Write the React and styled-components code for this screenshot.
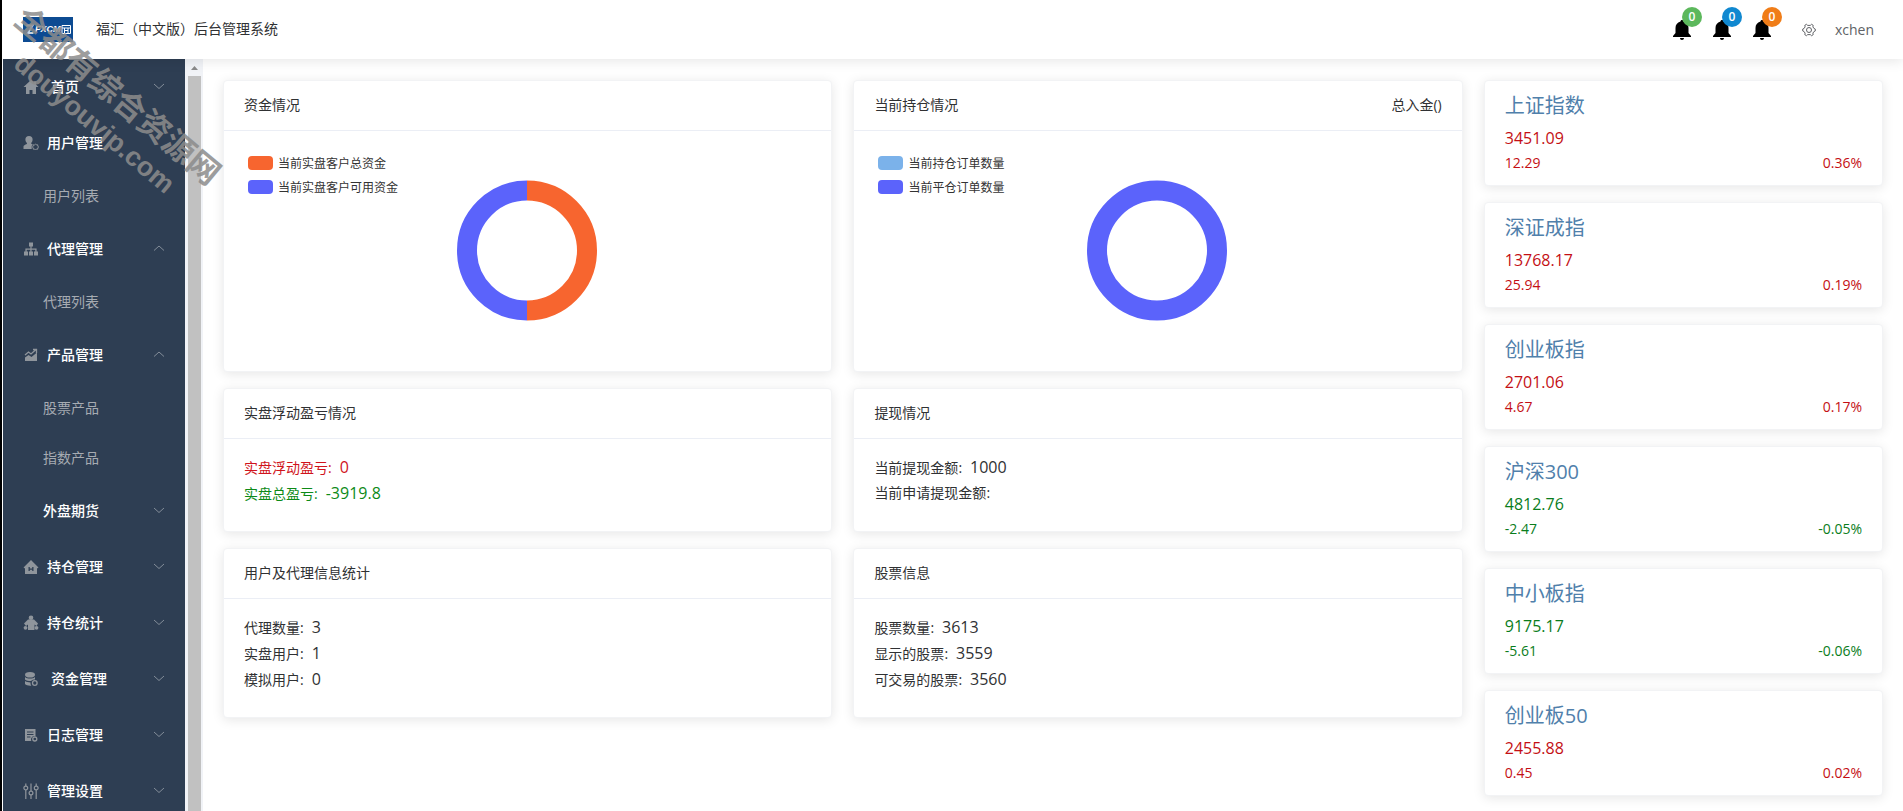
import { useState } from 'react';
import styled, { createGlobalStyle } from 'styled-components';

// Base page styles
const GlobalStyle = createGlobalStyle`
  * {
    box-sizing: border-box;
  }

  body {
    margin: 0;
    background: #fff;
    color: #303133;
    font-family: 'Open Sans', 'Noto Sans CJK SC', sans-serif;
    font-size: 14px;
  }

  button {
    font: inherit;
    border: none;
    background: none;
    padding: 0;
    cursor: pointer;
  }

  a {
    text-decoration: none;
  }

  h1, h2, h3, p, ul, dl, dd {
    margin: 0;
    padding: 0;
    font-weight: normal;
    font-size: inherit;
  }
`;

const Page = styled.div`
  position: relative;
  display: flex;
  flex-direction: column;
  height: 100vh;
  overflow: hidden;
  border-left: 2px solid #000;
`;

// Top bar
const TopBar = styled.header`
  display: flex;
  align-items: center;
  flex: none;
  height: 59px;
  padding: 0 29px 0 21px;
  background: #fff;
  box-shadow: 0 2px 12px rgba(0, 0, 0, 0.1);
  z-index: 1;
`;

const Logo = styled.svg`
  width: 50px;
  height: 25px;
  margin-right: 23px;
`;

const SiteTitle = styled.h1`
  flex: 1;
  padding-bottom: 2px;
  line-height: 20px;
`;

const Notices = styled.div`
  display: flex;
  gap: 20px;
  margin-right: 30px;
`;

const NoticeButton = styled.button`
  position: relative;
  width: 20px;
  height: 20px;

  svg {
    display: block;
  }
`;

const Badge = styled.span`
  position: absolute;
  left: 10px;
  top: -13px;
  width: 20px;
  height: 20px;
  border-radius: 50%;
  background: ${(props) => props.$color};
  color: #fff;
  font-size: 12px;
  font-weight: 600;
  line-height: 20px;
  text-align: center;
`;

const SettingButton = styled.button`
  display: flex;
  margin-right: 19px;
  color: #606266;
`;

const UserLink = styled.a`
  color: #606266;
  line-height: 20px;
`;

// Sidebar
const Body = styled.div`
  display: flex;
  flex: 1;
  min-height: 0;
`;

const Sidebar = styled.nav`
  flex: none;
  width: 183px;
  overflow: hidden;
  border-left: 1px solid #fff;
  background: #2e3e53;
`;

const MenuButton = styled.button`
  display: flex;
  align-items: center;
  width: 100%;
  height: 56px;
  padding: 0 20px 2px ${(props) => (props.$plain ? '40px' : '20px')};
  color: #fff;
  text-align: left;
`;

const MenuIcon = styled.svg`
  flex: none;
  width: 16px;
  height: 16px;
  margin-top: 2px;
  margin-right: ${(props) => (props.$wide ? '12px' : '8px')};
  color: #8f959c;
  fill: currentColor;
`;

const MenuLabel = styled.span`
  flex: 1;
  font-weight: 500;
`;

const Chevron = styled.svg`
  width: 12px;
  height: 12px;
  fill: none;
  stroke: #838d99;
`;

const SubLink = styled.a`
  display: block;
  height: 50px;
  padding-left: 40px;
  color: #a6abb2;
  line-height: 50px;
`;

const ScrollTrack = styled.div`
  display: flex;
  flex-direction: column;
  flex: none;
  width: 18px;
  padding: 0 2px 0 3px;
  background: #f1f3f7;
`;

const ScrollArrow = styled.svg`
  flex: none;
  width: 13px;
  height: 17px;
  fill: #8a8a8a;
`;

const ScrollThumb = styled.div`
  flex: 1;
  background: #c1c1c1;
`;

// Dashboard
const Main = styled.main`
  flex: 1;
  min-width: 0;
  overflow: hidden;
  display: grid;
  grid-template-columns: minmax(0, 609fr) minmax(0, 609fr) minmax(0, 399fr);
  align-items: start;
  gap: 21px;
  padding: 21px 20px;
`;

const Column = styled.div`
  display: flex;
  flex-direction: column;
  gap: 16px;
`;

const Card = styled.section`
  border: 1px solid #f2f3f5;
  border-radius: 4px;
  background: #fff;
  box-shadow: 0 2px 12px rgba(0, 0, 0, 0.1);
`;

const CardHeader = styled.div`
  display: flex;
  justify-content: space-between;
  padding: 14px 20px 15px;
  border-bottom: 1px solid #ebeef5;
  line-height: 20px;
`;

const CardBody = styled.dl`
  padding: 15px 20px 25px;
`;

const InfoLine = styled.div`
  display: flex;
  align-items: baseline;
  gap: 8px;
  height: 26px;
  line-height: 26px;
  color: ${(props) => props.$color || '#303133'};

  dd {
    font-size: 16px;
  }
`;

const ChartBody = styled.div`
  display: grid;
  grid-template-columns: 1fr auto 1fr;
  padding: 20px 26px 21px 24px;
`;

const Legend = styled.ul`
  list-style: none;
`;

const LegendItem = styled.li`
  display: flex;
  align-items: center;
  gap: 5px;
  height: 24px;
  color: #333;
  font-size: 12px;
  white-space: nowrap;

  &::before {
    content: '';
    width: 25px;
    height: 14px;
    border-radius: 4px;
    background: ${(props) => props.$color};
  }
`;

const Donut = styled.svg`
  width: 140px;
  height: 199px;
  fill: none;
  stroke-width: 20px;
`;

const IndexCard = styled(Card)`
  padding: 10px 20px;
  color: ${(props) => (props.$up ? '#c40f14' : '#0a7d1c')};
`;

const IndexName = styled.h3`
  color: #5080ab;
  font-size: 20px;
  line-height: 30px;
`;

const IndexPrice = styled.p`
  margin-top: 4px;
  font-size: 16px;
  line-height: 26px;
`;

const IndexChange = styled.p`
  display: flex;
  justify-content: space-between;
  line-height: 24px;
`;

// Diagonal site stamp over the page corner
const Stamp = styled.div`
  position: absolute;
  left: -36px;
  top: 74px;
  width: 280px;
  color: #8c8c8c;
  font-family: 'Liberation Sans', 'Noto Sans CJK SC', sans-serif;
  font-size: 32px;
  font-weight: 700;
  line-height: 36px;
  opacity: 0.85;
  text-align: center;
  transform: rotate(40deg);
  pointer-events: none;
  z-index: 2;

  small {
    display: block;
    font-size: 27px;
  }
`;

const icons = {
  home: <path d="M8 1 0.5 8H3v7h3.5v-4h3v4H13V8h2.5L13 5.600V2.500h-2v1.300z" />,
  user: (
    <>
      <path d="M6 1a3.600 3.600 0 0 1 3.600 3.600c0 1.500-.6 2.600-1.400 3.300v.8l1.500.6A4.500 4.500 0 0 0 8.700 14H.5v-2.500c0-1.200 1.500-1.800 3.400-2.600v-1C3 7.200 2.400 6.100 2.400 4.600A3.600 3.600 0 0 1 6 1z" />
      <path d="m12.500 9 .9.900 1.300-.1.100 1.300.9.900-.9.900-.1 1.300-1.300-.1-.9.900-.9-.9-1.300.1-.1-1.300-.9-.9.900-.9.100-1.300 1.300.1z" fill="none" stroke="currentColor" />
    </>
  ),
  agent: <path d="M6 1.500h4v4H8.600v2h5v3H15v4h-4v-4h1.300V8.800H8.600v1.700H10v4H6v-4h1.300V8.800H3.700v1.700H5v4H1v-4h1.400v-3h5v-2H6z" />,
  product: (
    <>
      <path d="M2 10.500 5.500 8l3 2L14 5.500V14H2z" />
      <path d="m2 8 3.500-3 2.500 2L12.500 3M10 2.500h3.500V6" fill="none" stroke="currentColor" strokeWidth="1.300" />
    </>
  ),
  position: <path fillRule="evenodd" d="M8 1 15.500 8.500 14 9.500V15H2V9.500L.5 8.500zM5.500 8v4h1.300v-1.300h2.400v1.300h1.300V8H9.200v1.500H6.800V8z" />,
  stats: (
    <>
      <circle cx="8" cy="2.800" r="2.300" />
      <path d="M5 4.500h6l4 4-1.500 2.500-2-1.500V15H5V9.500L3 11 1 8.500z" />
      <circle cx="2.500" cy="12.800" r="1.900" />
      <circle cx="13.500" cy="12.800" r="1.900" />
    </>
  ),
  money: (
    <>
      <ellipse cx="7" cy="3.800" rx="5" ry="2.800" />
      <path d="M2 6c2 2 8 2 10 0v2.500A4 4 0 0 0 8 10C5.500 10 3 9.500 2 8.500zM2 10c1.500 1 3.500 1.400 5.500 1.400a5 5 0 0 0 .8 3.300C5.500 15 3 14 2 13z" />
      <circle cx="11.800" cy="12" r="2.300" fill="none" stroke="currentColor" strokeWidth="1.300" />
    </>
  ),
  log: (
    <>
      <path fillRule="evenodd" d="M2 2h10.500v7.200A3.500 3.500 0 0 0 8.300 14H2zM4 4.500v1h6.500v-1zM4 7v1h6.500V7zM4 9.500v1h3.500v-1z" />
      <circle cx="11.800" cy="12" r="2" fill="none" stroke="currentColor" strokeWidth="1.300" />
    </>
  ),
  setting: (
    <g fill="none" stroke="currentColor" strokeWidth="1.200">
      <path d="M2.800 0.500v2.500M2.800 7v9M8 0.500v7.500M8 12v4M13.200 0.500v2.500M13.200 7v9" />
      <circle cx="2.800" cy="5" r="1.900" />
      <circle cx="8" cy="10" r="1.900" />
      <circle cx="13.200" cy="5" r="1.900" />
    </g>
  ),
};

const menus = [
  { title: '首页', icon: 'home', wide: true },
  { title: '用户管理', icon: 'user', noArrow: true, children: ['用户列表'] },
  { title: '代理管理', icon: 'agent', children: ['代理列表'] },
  { title: '产品管理', icon: 'product', children: ['股票产品', '指数产品'] },
  { title: '外盘期货' },
  { title: '持仓管理', icon: 'position' },
  { title: '持仓统计', icon: 'stats' },
  { title: '资金管理', icon: 'money', wide: true },
  { title: '日志管理', icon: 'log' },
  { title: '管理设置', icon: 'setting' },
];

const notices = [
  { name: '充值提醒', count: 0, color: '#5cb85c' },
  { name: '提现提醒', count: 0, color: '#1088d0' },
  { name: '用户提醒', count: 0, color: '#f07d18' },
];

const indexes = [
  { name: '上证指数', price: '3451.09', change: '12.29', rate: '0.36%' },
  { name: '深证成指', price: '13768.17', change: '25.94', rate: '0.19%' },
  { name: '创业板指', price: '2701.06', change: '4.67', rate: '0.17%' },
  { name: '沪深300', price: '4812.76', change: '-2.47', rate: '-0.05%' },
  { name: '中小板指', price: '9175.17', change: '-5.61', rate: '-0.06%' },
  { name: '创业板50', price: '2455.88', change: '0.45', rate: '0.02%' },
];

const MenuGroup = ({ menu }) => {
  const [open, setOpen] = useState(Boolean(menu.children));

  return (
    <>
      <MenuButton $plain={!menu.icon} aria-expanded={open} onClick={() => setOpen(!open)}>
        {menu.icon && (
          <MenuIcon viewBox="0 0 16 16" $wide={menu.wide}>{icons[menu.icon]}</MenuIcon>
        )}
        <MenuLabel>{menu.title}</MenuLabel>
        {!menu.noArrow && (
          <Chevron viewBox="0 0 12 12">
            <path d={open ? 'M1 8.500 6 4l5 4.500' : 'M1 4l5 4.500L11 4'} />
          </Chevron>
        )}
      </MenuButton>
      {open && menu.children && menu.children.map((child) => (
        <SubLink href="#" key={child}>{child}</SubLink>
      ))}
    </>
  );
};

const InfoCard = ({ title, rows }) => (
  <Card>
    <CardHeader>
      <h2>{title}</h2>
    </CardHeader>
    <CardBody>
      {rows.map((row) => (
        <InfoLine key={row.label} $color={row.color}>
          <dt>{row.label}:</dt>
          <dd>{row.value}</dd>
        </InfoLine>
      ))}
    </CardBody>
  </Card>
);

const ChartCard = ({ title, extra, legend, children }) => (
  <Card>
    <CardHeader>
      <h2>{title}</h2>
      {extra && <span>{extra}</span>}
    </CardHeader>
    <ChartBody>
      <Legend>
        {legend.map((item) => (
          <LegendItem key={item.name} $color={item.color}>{item.name}</LegendItem>
        ))}
      </Legend>
      <Donut viewBox="0 0 140 199">{children}</Donut>
    </ChartBody>
  </Card>
);

const App = () => (
  <Page>
    <GlobalStyle />
    <TopBar>
      <Logo viewBox="0 0 50 25">
        <rect width="50" height="25" fill="#0d4b92" />
        <path d="M3.500 8.500h6L5 16h5.500" fill="none" stroke="#c8d4e0" strokeWidth="2" />
        <text x="12" y="15" fill="#fff" fontFamily="Liberation Sans, sans-serif" fontSize="9" fontWeight="700" fontStyle="italic">FXCM</text>
        <path d="M39 8.500h8.500v8H39zM39 11h8.500M41.500 11v5.500M45 11v5.500M41.500 13.500H45" fill="none" stroke="#fff" />
      </Logo>
      <SiteTitle>福汇（中文版）后台管理系统</SiteTitle>
      <Notices>
        {notices.map((notice) => (
          <NoticeButton key={notice.name} aria-label={notice.name}>
            <svg width="20" height="20" viewBox="0 0 20 20">
              <path d="M10 0c.9 0 1.500.6 1.500 1.500C14.800 2.300 16.500 5 16.500 8v5l2.500 3v1H1v-1l2.500-3V8c0-3 1.700-5.700 5-6.500C8.500.6 9.100 0 10 0zM8 18h4c0 1.200-.8 2-2 2s-2-.8-2-2z" />
            </svg>
            <Badge $color={notice.color}>{notice.count}</Badge>
          </NoticeButton>
        ))}
      </Notices>
      <SettingButton aria-label="设置">
        <svg width="14" height="14" viewBox="0 0 14 14" fill="none" stroke="currentColor" strokeLinejoin="round">
          <path d="M4.500 1.300 5.700 2.400h2.600L9.500 1.300l1.700 1-.3 1.600L12 5.500l1.300.6v1.800l-1.300.6-1.100 1.600.3 1.600-1.700 1-1.200-1.100H5.700l-1.200 1.100-1.700-1 .3-1.600L2 8.500.7 7.900V6.100L2 5.500l1.100-1.600-.3-1.600z" />
          <circle cx="7" cy="7" r="2.500" />
        </svg>
      </SettingButton>
      <UserLink href="#">xchen</UserLink>
    </TopBar>

    <Body>
      <Sidebar>
        {menus.map((menu) => (
          <MenuGroup key={menu.title} menu={menu} />
        ))}
      </Sidebar>
      <ScrollTrack>
        <ScrollArrow viewBox="0 0 13 17">
          <path d="M3 11l3.500-4 3.500 4z" />
        </ScrollArrow>
        <ScrollThumb />
      </ScrollTrack>

      <Main>
        <Column>
          <ChartCard
            title="资金情况"
            legend={[
              { name: '当前实盘客户总资金', color: '#f7652f' },
              { name: '当前实盘客户可用资金', color: '#5b63fb' },
            ]}
          >
            <path d="M70 39.500a60 60 0 0 1 0 120" stroke="#f7652f" />
            <path d="M70 159.500a60 60 0 0 1 0-120" stroke="#5b63fb" />
          </ChartCard>
          <InfoCard
            title="实盘浮动盈亏情况"
            rows={[
              { label: '实盘浮动盈亏', value: '0', color: '#d0141c' },
              { label: '实盘总盈亏', value: '-3919.8', color: '#0d8a17' },
            ]}
          />
          <InfoCard
            title="用户及代理信息统计"
            rows={[
              { label: '代理数量', value: '3' },
              { label: '实盘用户', value: '1' },
              { label: '模拟用户', value: '0' },
            ]}
          />
        </Column>

        <Column>
          <ChartCard
            title="当前持仓情况"
            extra="总入金()"
            legend={[
              { name: '当前持仓订单数量', color: '#7bb2ea' },
              { name: '当前平仓订单数量', color: '#5b63fb' },
            ]}
          >
            <circle cx="70" cy="99.500" r="60" stroke="#5b63fb" />
          </ChartCard>
          <InfoCard
            title="提现情况"
            rows={[
              { label: '当前提现金额', value: '1000' },
              { label: '当前申请提现金额', value: '' },
            ]}
          />
          <InfoCard
            title="股票信息"
            rows={[
              { label: '股票数量', value: '3613' },
              { label: '显示的股票', value: '3559' },
              { label: '可交易的股票', value: '3560' },
            ]}
          />
        </Column>

        <Column>
          {indexes.map((item) => (
            <IndexCard key={item.name} $up={!item.change.startsWith('-')}>
              <IndexName>{item.name}</IndexName>
              <IndexPrice>{item.price}</IndexPrice>
              <IndexChange>
                <span>{item.change}</span>
                <span>{item.rate}</span>
              </IndexChange>
            </IndexCard>
          ))}
        </Column>
      </Main>
    </Body>

    <Stamp>
      全都有综合资源网
      <small>douyouvip.com</small>
    </Stamp>
  </Page>
);

export default App;
